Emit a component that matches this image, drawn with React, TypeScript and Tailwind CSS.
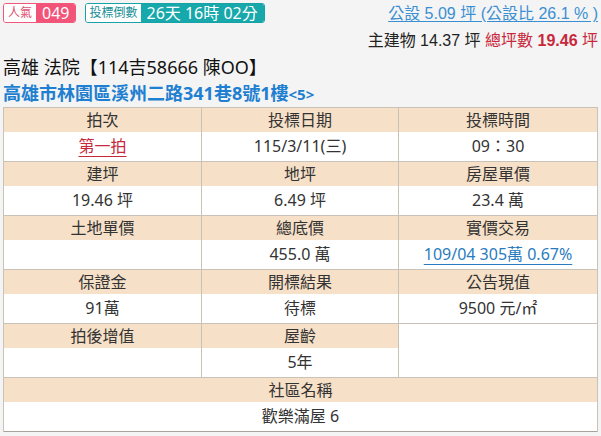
import React from 'react';

interface CellData {
  label: string;
  value?: React.ReactNode;
}

const rows: CellData[][] = [
  [
    { label: '拍次', value: <span className="text-[#c8283c] underline decoration-[#c8283c] underline-offset-4">第一拍</span> },
    { label: '投標日期', value: '115/3/11(三)' },
    { label: '投標時間', value: '09：30' },
  ],
  [
    { label: '建坪', value: '19.46 坪' },
    { label: '地坪', value: '6.49 坪' },
    { label: '房屋單價', value: '23.4 萬' },
  ],
  [
    { label: '土地單價', value: '' },
    { label: '總底價', value: '455.0 萬' },
    {
      label: '實價交易',
      value: <span className="text-[#2a7cc0] underline decoration-[#2a7cc0] underline-offset-4">109/04 305萬 0.67%</span>,
    },
  ],
  [
    { label: '保證金', value: '91萬' },
    { label: '開標結果', value: '待標' },
    { label: '公告現值', value: '9500 元/㎡' },
  ],
];

const headCell = 'h-[24px] bg-[#f6e0c7] border-x border-t border-[#c9c2b8] text-center align-middle p-0 leading-none';
const valueCell = 'h-[30px] bg-white border-x border-[#c9c2b8] text-center align-middle p-0 leading-none';

const App: React.FC = () => {
  return (
    <div
      className="w-[601px] h-[436px] overflow-hidden bg-[#f4f4f4] px-[3px] text-[#222]"
      style={{ fontFamily: '"Noto Sans", "Noto Sans CJK TC", sans-serif' }}
    >
      <div className="flex justify-between h-[54px]">
        <div className="flex items-start gap-[9px] pt-[3px]">
          <div className="flex h-[20px] rounded-[3px] border border-[#f0577a] overflow-hidden leading-none">
            <span className="flex items-center px-[4px] bg-white text-[12px] text-[#e04f70]">人氣</span>
            <span className="flex items-center px-[6px] bg-[#f25479] text-white text-[16px]">049</span>
          </div>
          <div className="flex h-[20px] rounded-[3px] border border-[#17a3a6] overflow-hidden leading-none">
            <span className="flex items-center px-[3px] bg-white text-[12px] text-[#178f96]">投標倒數</span>
            <span className="flex items-center px-[6px] bg-[#17a8ab] text-white text-[16px]">26天 16時 02分</span>
          </div>
        </div>
        <div
          className="flex flex-col items-end pt-[4px]"
          style={{ fontFamily: '"Liberation Sans", "Noto Sans CJK TC", sans-serif' }}
        >
          <span className="text-[16px] leading-[20px] text-[#3a8fd2] underline decoration-[#3a8fd2] underline-offset-2">
            公設 5.09 坪 (公設比 26.1 % )
          </span>
          <span className="mt-[7px] text-[16px] leading-[20px]">
            主建物 14.37 坪 <span className="text-[#c8283c]">總坪數 <b>19.46</b> 坪</span>
          </span>
        </div>
      </div>
      <div className="text-[18px] leading-[26px] text-[#111]">高雄 法院【114吉58666 陳OO】</div>
      <div className="text-[18px] leading-[26px] font-bold text-[#1f7fd0]">
        高雄市林園區溪州二路341巷8號1樓<span className="text-[15px]">&lt;5&gt;</span>
      </div>
      <table className="w-[594px] border-collapse table-fixed border border-[#a8a29a] text-[16px] text-[#333]">
        <colgroup>
          <col className="w-[198px]" />
          <col className="w-[197px]" />
          <col className="w-[199px]" />
        </colgroup>
        <tbody>
          {rows.map((row, i) => (
            <React.Fragment key={i}>
              <tr>
                {row.map((c) => (
                  <td key={c.label} className={headCell}>{c.label}</td>
                ))}
              </tr>
              <tr>
                {row.map((c) => (
                  <td key={c.label} className={valueCell}>{c.value}</td>
                ))}
              </tr>
            </React.Fragment>
          ))}
          <tr>
            <td className={headCell}>拍後增值</td>
            <td className={headCell}>屋齡</td>
            <td rowSpan={2} className="bg-white border border-[#c9c2b8] p-0" />
          </tr>
          <tr>
            <td className={valueCell}></td>
            <td className={valueCell}>5年</td>
          </tr>
          <tr>
            <td colSpan={3} className={headCell}>社區名稱</td>
          </tr>
          <tr>
            <td colSpan={3} className={valueCell}>歡樂滿屋 6</td>
          </tr>
        </tbody>
      </table>
    </div>
  );
};

export default App;
